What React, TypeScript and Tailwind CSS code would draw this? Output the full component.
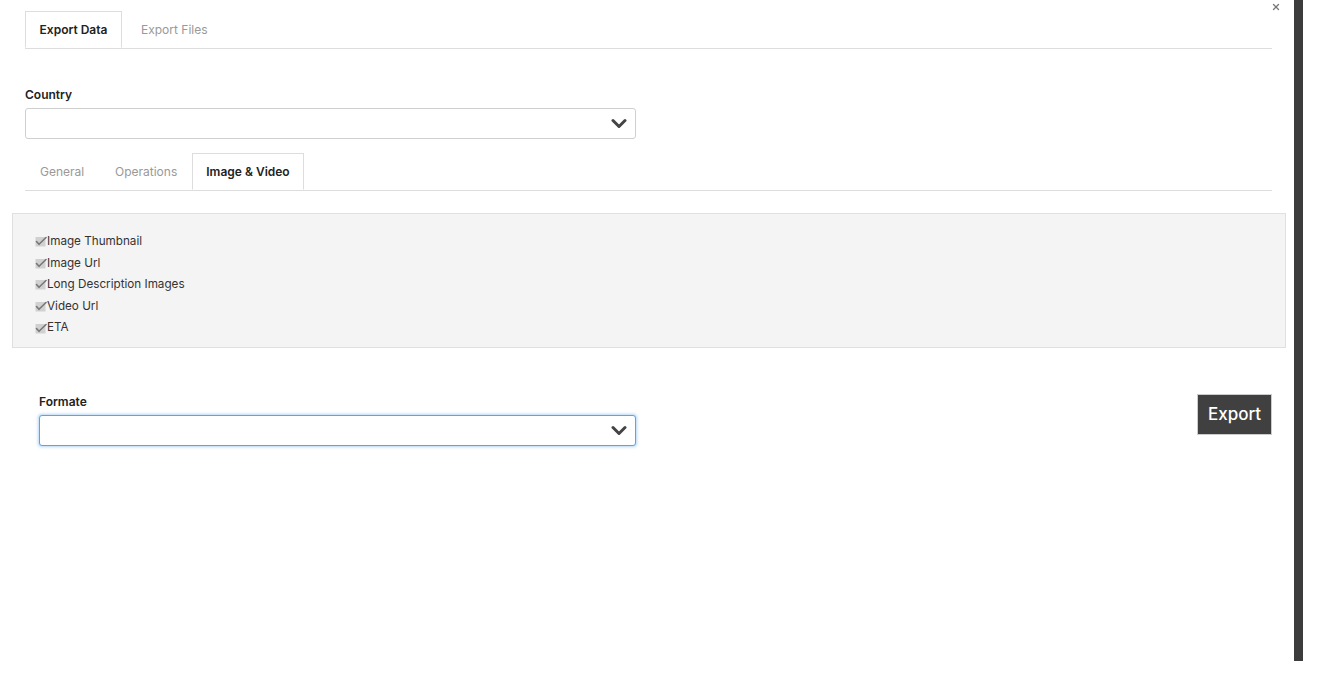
import { X } from 'lucide-react'

const FONT = { fontFamily: 'Inter, "Liberation Sans", sans-serif' }

const FIELDS = ['Image Thumbnail', 'Image Url', 'Long Description Images', 'Video Url', 'ETA'] as const

function Chevron() {
  return (
    <svg width="16" height="11" viewBox="0 0 16 11" className="text-[#444]">
      <path d="M2 2.5 L8 8.5 L14 2.5" fill="none" stroke="currentColor" strokeWidth="3" strokeLinecap="round" strokeLinejoin="round" />
    </svg>
  )
}

function CheckMark() {
  return (
    <svg width="12" height="11" viewBox="0 0 12 11" className="shrink-0">
      <rect x="0.5" y="1" width="10" height="9.5" fill="#d0d0d0" />
      <path d="M1.5 5.5 L4 8.3 L11 1.5" fill="none" stroke="#777" strokeWidth="1.6" strokeLinecap="round" strokeLinejoin="round" />
    </svg>
  )
}

function Select({ focused }: { focused?: boolean }) {
  return (
    <div
      className={[
        'flex h-[31px] items-center justify-end rounded-[3px] bg-white pr-[8px]',
        focused
          ? 'border border-[#5aa5ea] shadow-[0_0_3px_1px_rgba(90,165,234,0.45)]'
          : 'border border-[#cfcfcf]',
      ].join(' ')}
    >
      <Chevron />
    </div>
  )
}

export default function App() {
  return (
    <div className="relative flex h-[696px] w-full bg-white text-[#333]" style={FONT}>
      <div className="w-[1294px] pl-[25px] pr-[22px] pt-[11px]">
        <button className="absolute left-[1271px] top-[2px] text-[#777]">
          <X className="h-[10px] w-[10px]" strokeWidth={3} />
        </button>

        <div className="flex border-b border-[#ddd]">
          <div className="-mb-px flex h-[37px] w-[97px] items-center justify-center border border-b-white border-[#ddd] bg-white text-[12px] font-semibold text-[#222]">
            Export Data
          </div>
          <div className="flex h-[37px] items-center px-[19px] text-[12px] text-[#999]">Export Files</div>
        </div>

        <div className="mt-[37px] text-[12px] font-semibold text-[#222]">Country</div>
        <div className="mt-[4px] w-[611px]">
          <Select />
        </div>

        <div className="mt-[14px] flex border-b border-[#ddd]">
          <div className="flex h-[37px] w-[75px] items-center pl-[15px] text-[12px] text-[#999]">General</div>
          <div className="flex h-[37px] w-[92px] items-center pl-[15px] text-[12px] text-[#999]">Operations</div>
          <div className="-mb-px flex h-[37px] w-[112px] items-center justify-center border border-b-white border-[#ddd] bg-white text-[12px] font-semibold text-[#222]">
            Image &amp; Video
          </div>
        </div>

        <div className="ml-[-13px] mr-[-14px] mt-[22px] h-[135px] border border-[#e0e0e0] bg-[#f4f4f4] pl-[22px] pt-[17px]">
          {FIELDS.map((f) => (
            <div key={f} className="flex h-[21.6px] items-center text-[11.7px] text-[#333]">
              <CheckMark />
              <span>{f}</span>
            </div>
          ))}
        </div>

        <div className="mt-[45px] flex items-start justify-between">
          <div className="w-[611px] pl-[14px]">
            <div className="text-[12px] font-semibold text-[#222]">Formate</div>
            <div className="mt-[4px]">
              <Select focused />
            </div>
          </div>
          <button className="mt-[1px] h-[41px] w-[75px] border border-[#ccc] bg-[#404040] text-[17px] font-medium text-white">
            Export
          </button>
        </div>
      </div>
      <div className="h-[661px] w-[9px] bg-[#3c3c3c]" />
    </div>
  )
}
